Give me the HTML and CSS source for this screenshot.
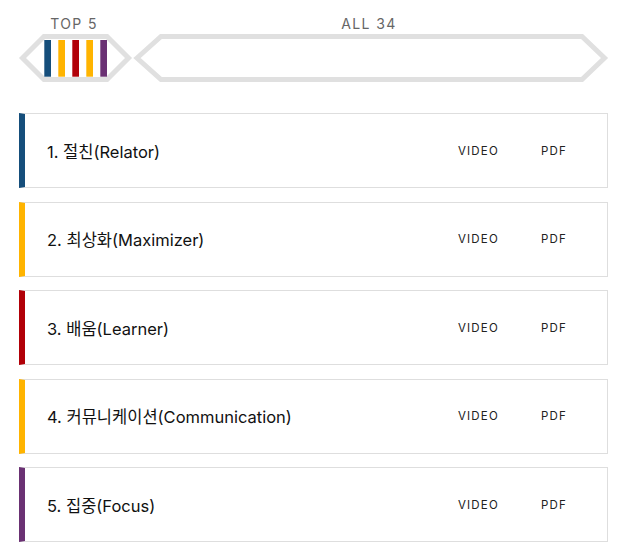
FILE: index.html
```html
<!DOCTYPE html>
<html lang="ko">
<head>
<meta charset="utf-8">
<link rel="stylesheet" href="styles.css">
</head>
<body>
<nav class="tabs">
  <div class="tab tab-top">
    <div class="tab-label">TOP 5</div>
    <svg class="tab-shape" width="116" height="52" viewBox="0 0 116 52">
      <polygon points="5.5,26 27,4.5 90,4.5 111.5,26 90,47.5 27,47.5" fill="#fff" stroke="#e0e0e0" stroke-width="5"/>
      <rect x="27.3" y="8" width="6.7" height="36.7" fill="#154e7b"/>
      <rect x="41.3" y="8" width="6.7" height="36.7" fill="#ffb400"/>
      <rect x="55.3" y="8" width="6.7" height="36.7" fill="#b10008"/>
      <rect x="69.3" y="8" width="6.7" height="36.7" fill="#ffb400"/>
      <rect x="83.3" y="8" width="6.7" height="36.7" fill="#6a3173"/>
    </svg>
  </div>
  <div class="tab tab-all">
    <div class="tab-label">ALL 34</div>
    <svg class="tab-shape" width="476" height="52" viewBox="0 0 476 52">
      <polygon points="4,26 28,4.5 449,4.5 471.5,26 449,47.5 28,47.5" fill="#fff" stroke="#e0e0e0" stroke-width="5"/>
    </svg>
  </div>
</nav>
<ul class="list">
  <li class="card c-blue"><span class="name">1. 절친(Relator)</span><span class="links"><a class="link">VIDEO</a><a class="link">PDF</a></span></li>
  <li class="card c-yellow"><span class="name">2. 최상화(Maximizer)</span><span class="links"><a class="link">VIDEO</a><a class="link">PDF</a></span></li>
  <li class="card c-red"><span class="name">3. 배움(Learner)</span><span class="links"><a class="link">VIDEO</a><a class="link">PDF</a></span></li>
  <li class="card c-yellow"><span class="name">4. 커뮤니케이션(Communication)</span><span class="links"><a class="link">VIDEO</a><a class="link">PDF</a></span></li>
  <li class="card c-purple"><span class="name">5. 집중(Focus)</span><span class="links"><a class="link">VIDEO</a><a class="link">PDF</a></span></li>
</ul>
</body>
</html>
```
FILE: styles.css
```css
html, body {
  margin: 0;
  padding: 0;
  background: #fff;
}
body {
  font-family: Inter, "Noto Sans CJK KR", sans-serif;
  color: #111;
}
.tabs {
  display: flex;
  padding: 15px 0 0 17px;
}
.tab {
  display: flex;
  flex-direction: column;
  align-items: center;
}
.tab-top { width: 116px; }
.tab-all { width: 476px; }
.tab-label {
  font-size: 14px;
  line-height: 17px;
  letter-spacing: 1.4px;
  color: #666;
  margin-right: 2px;
}
.tab-all .tab-label {
  margin-right: 4px;
}
.tab-shape {
  display: block;
}
.list {
  list-style: none;
  margin: 29px 9px 0 19px;
  padding: 0;
}
.card {
  display: flex;
  align-items: center;
  justify-content: space-between;
  box-sizing: border-box;
  height: 75px;
  margin-bottom: 13.5px;
  border: 1px solid #dedede;
  border-left: 6px solid #154e7b;
  padding: 0 40px 0 22px;
}
.c-blue { border-left-color: #154e7b; }
.c-yellow { border-left-color: #ffb400; }
.c-red { border-left-color: #b10008; }
.c-purple { border-left-color: #6a3173; }
.name {
  font-size: 16.5px;
  color: #111;
}
.links {
  display: flex;
  gap: 42px;
}
.link {
  font-size: 11.5px;
  letter-spacing: 1.2px;
  color: #222;
}
```
